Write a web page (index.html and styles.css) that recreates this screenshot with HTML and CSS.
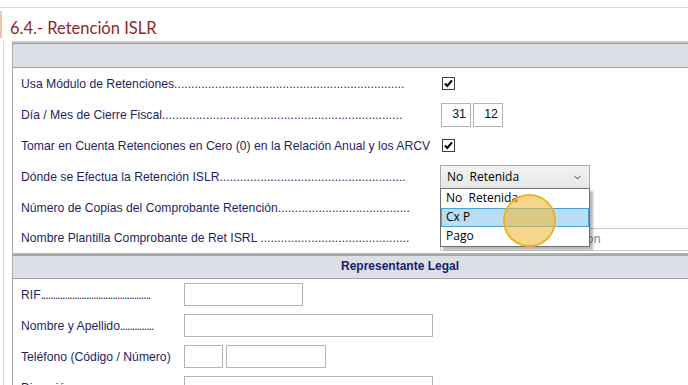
FILE: index.html
```html
<!DOCTYPE html>
<html lang="es">
<head>
<meta charset="utf-8">
<title>6.4.- Retención ISLR</title>
<link rel="stylesheet" href="styles.css">
</head>
<body>
<div class="topline"></div>
<h1 class="title">6.4.- Retención ISLR</h1>
<div class="content">
  <section class="panel panel-ret">
    <div class="panel-head"></div>
    <div class="rows">
      <div class="row">
        <span class="label">Usa Módulo de Retenciones....................................................................</span>
        <span class="checkbox"><svg viewBox="0 0 11 11" width="11" height="11"><polyline points="2,5.5 4.3,8 9,2.3" fill="none" stroke="#000" stroke-width="2"/></svg></span>
      </div>
      <div class="row">
        <span class="label">Día / Mes de Cierre Fiscal.......................................................................</span>
        <span class="num">31</span>
        <span class="num">12</span>
      </div>
      <div class="row">
        <span class="label">Tomar en Cuenta Retenciones en Cero (0) en la Relación Anual y los ARCV</span>
        <span class="checkbox"><svg viewBox="0 0 11 11" width="11" height="11"><polyline points="2,5.5 4.3,8 9,2.3" fill="none" stroke="#000" stroke-width="2"/></svg></span>
      </div>
      <div class="row">
        <span class="label">Dónde se Efectua la Retención ISLR.......................................................</span>
        <div class="select">
          <span>No&nbsp; Retenida</span>
          <svg class="chev" viewBox="0 0 7 5" width="7" height="5"><polyline points="0.5,0.8 3.5,3.8 6.5,0.8" fill="none" stroke="#7a7a7a" stroke-width="1.1"/></svg>
          <ul class="menu">
            <li>No&nbsp; Retenida</li>
            <li class="active">Cx P</li>
            <li>Pago</li>
            <li class="cursor" aria-hidden="true"></li>
          </ul>
        </div>
      </div>
      <div class="row">
        <span class="label">Número de Copias del Comprobante Retención.......................................</span>
      </div>
      <div class="row row-last">
        <span class="label">Nombre Plantilla Comprobante de Ret ISRL ............................................</span>
        <span class="text-field">Comprobante de Retencion</span>
      </div>
    </div>
  </section>
  <section class="panel panel-rep">
    <div class="panel-head"><span>Representante Legal</span></div>
    <div class="rows">
      <div class="row">
        <span class="label">RIF<span class="lead">..............................................</span></span>
        <span class="field w-rif"></span>
      </div>
      <div class="row">
        <span class="label">Nombre y Apellido<span class="lead">..............</span></span>
        <span class="field w-long"></span>
      </div>
      <div class="row">
        <span class="label">Teléfono (Código / Número)</span>
        <span class="field w-code"></span>
        <span class="field w-phone"></span>
      </div>
      <div class="row">
        <span class="label">Dirección<span class="lead">..............................</span></span>
        <span class="field w-long"></span>
      </div>
    </div>
  </section>
</div>
</body>
</html>
```
FILE: styles.css
```css
* { box-sizing: border-box; }
html, body { margin: 0; padding: 0; }
body {
  width: 688px;
  height: 385px;
  overflow: hidden;
  background: #fff;
  font-family: "Liberation Sans", Arial, sans-serif;
  font-size: 12.2px;
  color: #1f1f63;
}
.topline {
  height: 8px;
  border-bottom: 1px solid #d9d9d9;
}
.title {
  margin: 3px 0 0 0;
  height: 27px;
  border-left: 2px solid #f0c6a6;
  padding: 7px 0 0 8px;
  font-family: Lato, "Open Sans", sans-serif;
  font-weight: 400;
  font-size: 16.5px;
  line-height: 20px;
  color: #8c2a2a;
  white-space: nowrap;
}
.content {
  margin: 3px 0 0 3px;
  border-left: 1px solid #d8d8d8;
  padding-left: 8px;
}
.panel {
  width: 776px;
  border-left: 1px solid #a9a9a9;
  border-right: 1px solid #a9a9a9;
}
.panel-ret {
  border-top: 2px solid #c8c8c8;
  border-bottom: 1px solid #b4b4b4;
}
.panel-head {
  height: 25px;
  background: #dcdfe6;
  border-top: 1px solid #9c9c9c;
  border-bottom: 1px solid #a2a2a2;
  text-align: center;
  font-weight: 700;
  font-size: 12px;
  line-height: 21px;
  color: #1b1b6b;
}
.panel-rep {
  border-top: 2px solid #a6a6a6;
}
.panel-rep .panel-head {
  height: 23px;
  border-top: 0;
}
.rows {
  display: flex;
  flex-direction: column;
}
.row {
  display: flex;
  align-items: center;
  height: 31px;
  padding-left: 8px;
}
.row-last { height: 30px; }
.label {
  flex: none;
  width: 419px;
  white-space: nowrap;
  overflow: hidden;
}
.panel-rep .label { width: 163px; }
.lead { letter-spacing: -1px; }
.checkbox {
  width: 13px;
  height: 13px;
  margin-left: 2px;
  border: 1px solid #3c3c3c;
  background: #fff;
  display: flex;
  align-items: center;
  justify-content: center;
}
.num {
  width: 30px;
  height: 24px;
  margin-left: 1px;
  margin-right: 1px;
  border: 1px solid #b4b4b4;
  text-align: right;
  padding-right: 4px;
  line-height: 20px;
  font-family: "Liberation Sans", Arial, sans-serif;
  font-size: 12.4px;
  color: #111;
}
.select {
  position: relative;
  width: 150px;
  height: 24px;
  margin-top: 1px;
  border: 1px solid #acacac;
  background: linear-gradient(#f3f3f3, #e6e6e6);
  padding-left: 6px;
  font-family: "Open Sans", "Noto Sans", sans-serif;
  font-size: 12px;
  line-height: 21px;
  color: #000;
  white-space: nowrap;
}
.chev {
  position: absolute;
  right: 8px;
  top: 9px;
}
.menu {
  position: absolute;
  left: -1px;
  top: 22px;
  z-index: 2;
  width: 150px;
  margin: 0;
  padding: 0;
  list-style: none;
  border: 1px solid #707070;
  background: #fff;
  box-shadow: 3px 3px 2px rgba(0, 0, 0, 0.28);
}
.menu li {
  height: 19px;
  padding-left: 5px;
  line-height: 18px;
}
.menu li.active {
  background: #b9ddf2;
  box-shadow: inset 0 0 0 1px #4d9fd6;
}
.menu li.cursor {
  position: absolute;
  left: 62px;
  top: 5px;
  width: 53px;
  height: 53px;
  padding: 0;
  border-radius: 50%;
  background: rgba(240, 186, 60, 0.6);
  border: 2px solid rgba(236, 176, 40, 0.95);
}
.text-field {
  width: 260px;
  height: 23px;
  margin-top: 2px;
  border: 1px solid #cacaca;
  padding-left: 6px;
  font-family: "Open Sans", "Noto Sans", sans-serif;
  font-size: 12px;
  line-height: 20px;
  color: #7c7c7c;
  white-space: nowrap;
}
.field {
  height: 23px;
  border: 1px solid #b4b4b4;
  background: #fff;
}
.w-rif { width: 119px; }
.w-long { width: 249px; }
.w-code { width: 39px; }
.w-phone { width: 100px; margin-left: 3px; }
```
